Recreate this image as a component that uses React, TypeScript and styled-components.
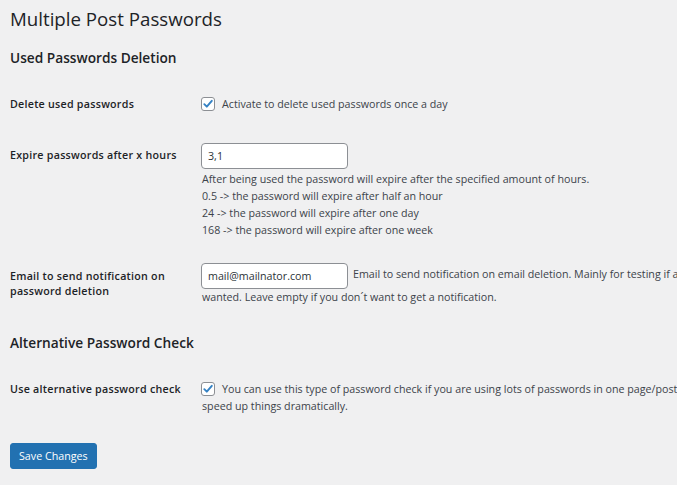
import React from "react";
import styled, { createGlobalStyle } from "styled-components";

const GlobalStyle = createGlobalStyle`
  html, body {
    margin: 0;
    padding: 0;
    background: #f0f0f1;
    overflow: hidden;
  }
  body {
    font-family: "Open Sans", "Noto Sans", sans-serif;
    font-size: 10.7px;
    color: #3c434a;
  }
`;

const Wrap = styled.div`
  padding: 6px 0 0 10px;
  width: 1200px;
`;

const Title = styled.h1`
  margin: 0;
  font-size: 18.7px;
  font-weight: 400;
  line-height: 26px;
  color: #1d2327;
`;

const SectionTitle = styled.h2<{ $top: number }>`
  margin: ${(p) => p.$top}px 0 0;
  font-size: 13.7px;
  font-weight: 600;
  line-height: 20px;
  color: #1d2327;
`;

const FormTable = styled.div`
  margin-top: 10.5px;
  display: flex;
  flex-direction: column;
`;

const Row = styled.div`
  display: flex;
  align-items: flex-start;
`;

const Label = styled.div`
  width: 192px;
  flex-shrink: 0;
  padding: 18.5px 0 17.5px;
  font-weight: 600;
  line-height: 15px;
  letter-spacing: 0.25px;
  color: #1d2327;
`;

const Field = styled.div<{ $pad: number; $bottom?: number }>`
  padding: ${(p) => p.$pad}px 0 ${(p) => p.$bottom ?? 13}px;
  line-height: 17px;
  white-space: nowrap;
`;

const Box = styled.span`
  display: inline-flex;
  align-items: center;
  justify-content: center;
  width: 14px;
  height: 14px;
  box-sizing: border-box;
  margin: 1.5px 7px 0 -1px;
  border: 1px solid #8c8f94;
  border-radius: 3px;
  background: #fff;
  vertical-align: top;
`;

const TextInput = styled.input`
  box-sizing: border-box;
  width: 147px;
  height: 26px;
  margin-left: -1px;
  padding: 0 6px;
  border: 1px solid #8c8f94;
  border-radius: 4px;
  background: #fff;
  font: inherit;
  color: #2c3338;
  vertical-align: middle;
  outline: none;
`;

const Description = styled.p`
  margin: 0;
  line-height: 17px;

  &:first-of-type {
    margin-top: 2px;
  }
`;

const InlineNote = styled.span`
  margin-left: 5px;
`;

const SubmitButton = styled.button`
  margin-top: 15px;
  height: 26px;
  padding: 0 8px;
  background: #2271b1;
  border: 1px solid #2271b1;
  border-radius: 3px;
  color: #fff;
  font: inherit;
  line-height: 24px;
  cursor: pointer;
`;

const CheckBox = () => (
  <Box>
    <svg width="12" height="12" viewBox="0 0 12 12">
      <path d="M2.3 6.2 L4.8 8.7 L9.8 2.8" fill="none" stroke="#3582c4" strokeWidth="1.9" strokeLinecap="round" strokeLinejoin="round" />
    </svg>
  </Box>
);

export default function App() {
  return (
    <Wrap>
      <GlobalStyle />
      <Title>Multiple Post Passwords</Title>

      <SectionTitle $top={16}>Used Passwords Deletion</SectionTitle>
      <FormTable>
        <Row>
          <Label>Delete used passwords</Label>
          <Field $pad={17}>
            <CheckBox />
            Activate to delete used passwords once a day
          </Field>
        </Row>
        <Row>
          <Label>Expire passwords after x hours</Label>
          <Field $pad={13.5} $bottom={11}>
            <TextInput defaultValue="3,1" />
            <Description>After being used the password will expire after the specified amount of hours.</Description>
            <Description>0.5 -&gt; the password will expire after half an hour</Description>
            <Description>24 -&gt; the password will expire after one day</Description>
            <Description>168 -&gt; the password will expire after one week</Description>
          </Field>
        </Row>
        <Row>
          <Label>
            Email to send notification on
            <br />
            password deletion
          </Label>
          <Field $pad={12.5}>
            <TextInput defaultValue="mail@mailnator.com" />
            <InlineNote>Email to send notification on email deletion. Mainly for testing if a</InlineNote>
            <br />
            wanted. Leave empty if you don´t want to get a notification.
          </Field>
        </Row>
      </FormTable>

      <SectionTitle $top={14.5}>Alternative Password Check</SectionTitle>
      <FormTable>
        <Row>
          <Label>Use alternative password check</Label>
          <Field $pad={17}>
            <CheckBox />
            You can use this type of password check if you are using lots of passwords in one page/post
            <br />
            speed up things dramatically.
          </Field>
        </Row>
      </FormTable>

      <SubmitButton>Save Changes</SubmitButton>
    </Wrap>
  );
}
